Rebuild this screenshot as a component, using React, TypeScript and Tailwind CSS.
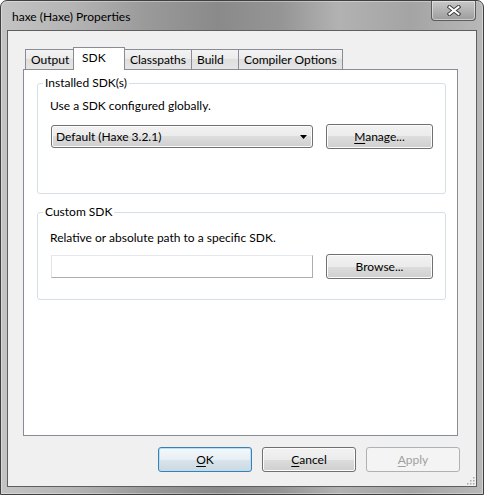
import React from "react";

const btnNormal =
  "border-[#707070] bg-[linear-gradient(to_bottom,#f2f2f2_0%,#ebebeb_50%,#dddddd_50%,#cfcfcf_100%)] shadow-[inset_0_0_0_1px_#fcfcfc] text-black";
const btnDefault =
  "border-[#3c7fb1] bg-[linear-gradient(to_bottom,#f3f8fb_0%,#e8eff4_50%,#d9e4ec_50%,#ccd9e2_100%)] shadow-[inset_0_0_0_1px_#b6e0f4] text-black";
const btnDisabled = "border-[#adb2b5] bg-[#f4f4f4] text-[#a0a0a0]";

function Btn({
  variant = "normal",
  className = "",
  children,
}: {
  variant?: "normal" | "default" | "disabled";
  className?: string;
  children: React.ReactNode;
}) {
  const v = variant === "default" ? btnDefault : variant === "disabled" ? btnDisabled : btnNormal;
  return (
    <div
      className={`flex h-[25px] shrink-0 items-center justify-center rounded-[3px] border text-[12px] leading-[16px] ${v} ${className}`}
    >
      {children}
    </div>
  );
}

function Tab({ label, w, selected = false, first = false }: { label: string; w: number; selected?: boolean; first?: boolean }) {
  if (selected) {
    return (
      <div
        className="relative z-10 -mb-px -ml-px flex h-[23px] items-start border-x border-t border-[#898c95] bg-white pl-[8px] pt-[2px] text-[12px] leading-[16px]"
        style={{ width: w }}
      >
        {label}
      </div>
    );
  }
  return (
    <div
      className={`flex h-[20px] items-start border-x border-t border-[#898c95] bg-[linear-gradient(to_bottom,#f3f3f3_0%,#ebebeb_50%,#dedede_50%,#e5e5e5_100%)] pl-[5px] pt-[2px] text-[12px] leading-[16px] ${first ? "" : "-ml-px"}`}
      style={{ width: w }}
    >
      {label}
    </div>
  );
}

export default function App() {
  return (
    <div className="h-[495px] w-[484px] overflow-hidden bg-white font-['Segoe_UI',Lato,sans-serif] text-black">
      <div className="relative flex h-full w-full flex-col rounded-t-[7px] border border-[#404040] bg-[linear-gradient(to_right,#c4c4c4_0%,#b4b4b4_15%,#9a9a9a_30%,#8a8a8a_45%,#959595_58%,#b2b2b2_70%,#a4a4a4_85%,#b8b8b8_100%)] shadow-[inset_0_0_0_1px_rgba(255,255,255,0.35)]">
        {/* title bar */}
        <div className="flex h-[29px] shrink-0 items-start justify-between">
          <span className="ml-[11px] mt-[8px] text-[12px] leading-[16px] text-black">haxe (Haxe) Properties</span>
          <div className="mr-[7px] flex h-[20px] w-[45px] items-center justify-center rounded-b-[4px] border border-t-0 border-[#5c5c5c] bg-[linear-gradient(to_bottom,#c8c8c8,#9c9c9c)] shadow-[inset_0_0_0_1px_rgba(255,255,255,0.45)]">
            <svg width="14" height="11" viewBox="0 0 14 11">
              <path d="M2.5 2 L11.5 9 M11.5 2 L2.5 9" stroke="#3c3c3c" strokeWidth="4" strokeLinecap="square" />
              <path d="M2.5 2 L11.5 9 M11.5 2 L2.5 9" stroke="#ffffff" strokeWidth="2" strokeLinecap="square" />
            </svg>
          </div>
        </div>

        {/* client */}
        <div className="relative mx-[6px] mb-[7px] flex flex-1 flex-col border border-[#5f5f5f] bg-[#f0f0f0] pt-[16px] pb-[14px]">
          <div className="ml-[15px] flex w-[435px] flex-1 flex-col">
            {/* tabs */}
            <div className="flex items-end pl-[2px]">
              <Tab label="Output" w={49} first />
              <Tab label="SDK" w={52} selected />
              <Tab label="Classpaths" w={68} />
              <Tab label="Build" w={48} />
              <Tab label="Compiler Options" w={105} />
            </div>
            {/* panel */}
            <div className="flex flex-1 flex-col border border-[#898c95] bg-white pl-[13px] pt-[5px]">
              <fieldset className="w-[409px] rounded-[3px] border border-[#d5dfe5]">
                <legend className="ml-[5px] px-[2px] text-[12px] leading-[16px]">Installed SDK(s)</legend>
                <div className="pl-[12px] pb-[44px]">
                  <div className="mt-[7px] text-[12px] leading-[16px]">Use a SDK configured globally.</div>
                  <div className="mt-[10px] flex items-center">
                    <div className="ml-[1px] flex h-[23px] w-[262px] items-center justify-between rounded-[3px] border border-[#707070] bg-[linear-gradient(to_bottom,#f2f2f2_0%,#ebebeb_50%,#dddddd_50%,#cfcfcf_100%)] pl-[4px] pr-[5px] text-[12px] leading-[16px] shadow-[inset_0_0_0_1px_#fcfcfc]">
                      <span>Default (Haxe 3.2.1)</span>
                      <svg width="7" height="4" viewBox="0 0 7 4">
                        <path d="M0 0 H7 L3.5 4 Z" fill="#000" />
                      </svg>
                    </div>
                    <Btn className="ml-[13px] w-[107px]">
                      <span>
                        <span className="underline underline-offset-2">M</span>anage...
                      </span>
                    </Btn>
                  </div>
                </div>
              </fieldset>

              <fieldset className="mt-[10px] w-[409px] rounded-[3px] border border-[#d5dfe5]">
                <legend className="ml-[5px] px-[2px] text-[12px] leading-[16px]">Custom SDK</legend>
                <div className="pl-[12px] pb-[20px]">
                  <div className="mt-[10px] text-[12px] leading-[16px]">Relative or absolute path to a specific SDK.</div>
                  <div className="mt-[8px] flex items-center">
                    <div className="ml-[1px] h-[23px] w-[262px] border border-[#abadb3] border-t-[#e3e9ef] border-l-[#e2e3ea] bg-white" />
                    <Btn className="ml-[13px] w-[107px]">Browse...</Btn>
                  </div>
                </div>
              </fieldset>
            </div>
          </div>

          {/* bottom buttons */}
          <div className="mt-[11px] flex justify-end gap-[10px] pr-[16px]">
            <Btn variant="default" className="w-[94px]">
              <span>
                <span className="underline underline-offset-2">O</span>K
              </span>
            </Btn>
            <Btn className="w-[94px]">
              <span>
                <span className="underline underline-offset-2">C</span>ancel
              </span>
            </Btn>
            <Btn variant="disabled" className="w-[94px]">
              <span>
                <span className="underline underline-offset-2">A</span>pply
              </span>
            </Btn>
          </div>

          {/* resize grip */}
          <svg className="absolute bottom-[1px] right-[1px]" width="10" height="10" viewBox="0 0 10 10">
            {[
              [8, 2],
              [5, 5],
              [8, 5],
              [2, 8],
              [5, 8],
              [8, 8],
            ].map(([x, y], i) => (
              <rect key={i} x={x} y={y} width="1.5" height="1.5" fill="#a8a8a8" />
            ))}
          </svg>
        </div>
      </div>
    </div>
  );
}
